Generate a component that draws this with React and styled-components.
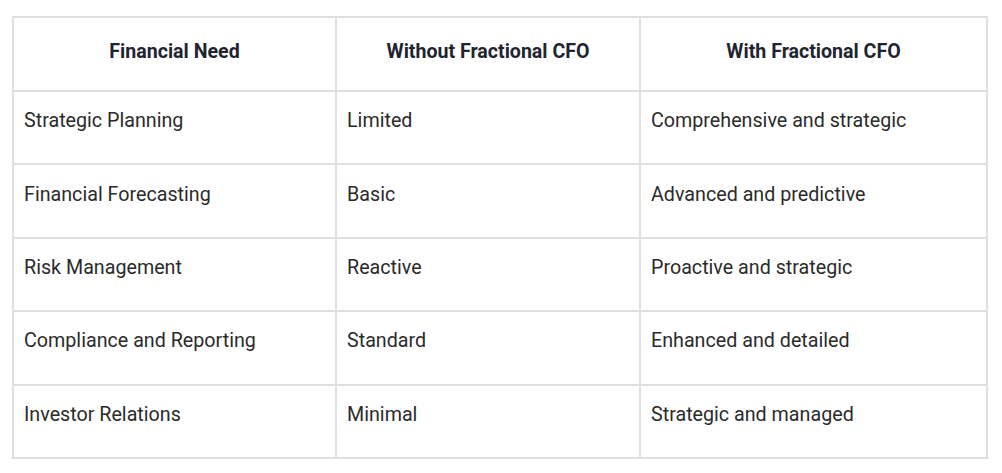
import React from "react";
import styled, { createGlobalStyle } from "styled-components";

const GlobalStyle = createGlobalStyle`
  body {
    margin: 0;
    background: #ffffff;
    font-family: Roboto, "Liberation Sans", sans-serif;
  }
`;

const Page = styled.div`
  padding: 16px 14px 14px 12px;
`;

const Table = styled.table`
  border-collapse: collapse;
  table-layout: fixed;
  width: 974px;
`;

const Col = styled.col`
  width: ${(p) => p.w}px;
`;

const HeadCell = styled.th`
  border: 2px solid #e0e0e0;
  height: 66px;
  padding: 0 10px 6px;
  font-size: 19.6px;
  font-weight: 700;
  color: #1f2530;
  text-align: center;
  vertical-align: middle;
`;

const Cell = styled.td`
  border: 2px solid #e0e0e0;
  height: 57.4px;
  padding: 0 10px 14px;
  font-size: 19.7px;
  color: #2b2b2b;
  text-align: left;
  vertical-align: middle;
`;

const rows = [
  ["Strategic Planning", "Limited", "Comprehensive and strategic"],
  ["Financial Forecasting", "Basic", "Advanced and predictive"],
  ["Risk Management", "Reactive", "Proactive and strategic"],
  ["Compliance and Reporting", "Standard", "Enhanced and detailed"],
  ["Investor Relations", "Minimal", "Strategic and managed"],
];

const App = () => {
  return (
    <Page>
      <GlobalStyle />
      <Table>
        <colgroup>
          <Col w={323} />
          <Col w={304} />
          <Col w={347} />
        </colgroup>
        <thead>
          <tr>
            <HeadCell>Financial Need</HeadCell>
            <HeadCell>Without Fractional CFO</HeadCell>
            <HeadCell>With Fractional CFO</HeadCell>
          </tr>
        </thead>
        <tbody>
          {rows.map((r) => (
            <tr key={r[0]}>
              {r.map((c) => (
                <Cell key={c}>{c}</Cell>
              ))}
            </tr>
          ))}
        </tbody>
      </Table>
    </Page>
  );
};

export default App;
